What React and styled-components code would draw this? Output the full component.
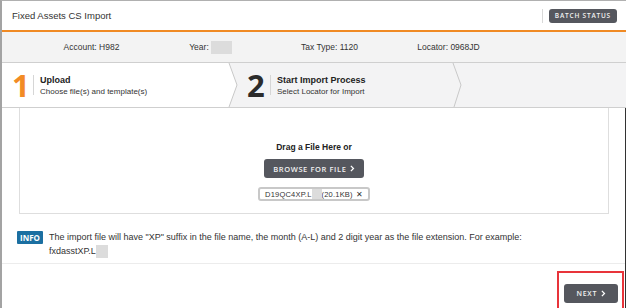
import React from "react";
import styled, { createGlobalStyle } from "styled-components";

const GlobalStyle = createGlobalStyle`
	* { box-sizing: border-box; }
	body {
		margin: 0;
		background: #fff;
		font-family: "Liberation Sans", Arial, sans-serif;
		color: #333;
	}
`;

const Chevron = ({ size = 7 }) => (
	<svg width={size * 0.62} height={size} viewBox="0 0 5 8">
		<path d="M1 1 L4 4 L1 7" fill="none" stroke="#fff" strokeWidth="1.5" />
	</svg>
);

const App = () => {
	return (
		<>
			<GlobalStyle />
			<Frame>
				<Header>
					<Title>Fixed Assets CS Import</Title>
					<HeaderRight>
						<Divider />
						<DarkButton $size="6.5px" $pad="0 6px" $h="14px">
							BATCH STATUS
						</DarkButton>
					</HeaderRight>
				</Header>

				<InfoBar>
					<InfoItem>Account: H982</InfoItem>
					<InfoItem>
						Year: <Blur $w="21px" $h="13px" />
					</InfoItem>
					<InfoItem>Tax Type: 1120</InfoItem>
					<InfoItem>Locator: 0968JD</InfoItem>
				</InfoBar>

				<Steps>
					<Step $width="235px" $active>
						<StepNum $color="#f28b25">1</StepNum>
						<StepSep />
						<StepText>
							<StepTitle>Upload</StepTitle>
							<StepSub>Choose file(s) and template(s)</StepSub>
						</StepText>
						<StepArrow viewBox="0 0 10 44" preserveAspectRatio="none">
							<polygon points="0,0 1,0 9,22 1,44 0,44" fill="#fff" />
							<polyline points="1,0 9,22 1,44" fill="none" stroke="#c8c8c8" strokeWidth="1" />
						</StepArrow>
					</Step>
					<Step $width="224px">
						<StepNum $color="#2b2b2b" $pl="10px">2</StepNum>
						<StepSep />
						<StepText>
							<StepTitle>Start Import Process</StepTitle>
							<StepSub>Select Locator for Import</StepSub>
						</StepText>
						<StepArrow viewBox="0 0 10 44" preserveAspectRatio="none">
							<polyline points="1,0 9,22 2,44" fill="none" stroke="#c8c8c8" strokeWidth="1" />
						</StepArrow>
					</Step>
				</Steps>

				<Body>
					<DropZone>
						<DropLabel>Drag a File Here or</DropLabel>
						<DarkButton $size="7.5px" $pad="0 9px" $h="19px" $ls="0.6px">
							BROWSE FOR FILE <Chevron size={7} />
						</DarkButton>
						<FileChip>
							D19QC4XP.L<Blur $w="10px" $h="10px" />(20.1KB)
							<Close>✕</Close>
						</FileChip>
					</DropZone>

					<Note>
						<Badge>INFO</Badge>
						<NoteText>
							The import file will have "XP" suffix in the file name, the month (A-L) and 2
							digit year as the file extension. For example:
							<br />
							fxdasstXP.L<Blur $w="12px" $h="13px" />
						</NoteText>
					</Note>

					<Footer>
						<Highlight>
							<DarkButton $size="7px" $pad="0 8px" $h="19px" $w="54px">
								NEXT <Chevron size={7} />
							</DarkButton>
						</Highlight>
					</Footer>
				</Body>
			</Frame>
		</>
	);
};

export default App;

const Frame = styled.div`
	width: 626px;
	height: 308px;
	border-top: 1px solid #b0b0b0;
	border-left: 2px solid #a3a3a3;
	display: flex;
	flex-direction: column;
	overflow: hidden;
`;

const Header = styled.div`
	height: 31px;
	flex: none;
	display: flex;
	align-items: center;
	justify-content: space-between;
	padding: 0 9px 0 10px;
	border-bottom: 2px solid #f08a24;
`;

const Title = styled.div`
	font-size: 9.5px;
	color: #333;
`;

const HeaderRight = styled.div`
	display: flex;
	align-items: center;
	gap: 6px;
`;

const Divider = styled.div`
	width: 1px;
	height: 14px;
	background: #d8d8d8;
`;

const DarkButton = styled.div`
	display: inline-flex;
	align-items: center;
	justify-content: center;
	gap: 4px;
	height: ${(p) => p.$h};
	width: ${(p) => p.$w || "auto"};
	padding: ${(p) => p.$pad};
	background: #55575e;
	color: #f2f2f2;
	border-radius: 3px;
	font-family: "Open Sans", sans-serif;
	font-weight: 600;
	font-size: ${(p) => p.$size};
	letter-spacing: ${(p) => p.$ls || "0.8px"};
	white-space: nowrap;
`;

const InfoBar = styled.div`
	height: 30px;
	flex: none;
	background: #f3f3f3;
	display: grid;
	grid-template-columns: repeat(4, 119px);
	align-items: center;
	padding-left: 30px;
`;

const InfoItem = styled.div`
	font-size: 8.5px;
	color: #333;
	text-align: center;
	display: flex;
	align-items: center;
	justify-content: center;
	gap: 2px;
`;

const Blur = styled.span`
	display: inline-block;
	width: ${(p) => p.$w};
	height: ${(p) => p.$h};
	background: #dcdcdc;
	filter: blur(0.6px);
	vertical-align: middle;
`;

const Steps = styled.div`
	height: 46px;
	flex: none;
	display: flex;
	background: #f3f3f4;
	border-top: 1px solid #cfcfcf;
	border-bottom: 1px solid #cfcfcf;
`;

const Step = styled.div`
	position: relative;
	width: ${(p) => p.$width};
	display: flex;
	align-items: center;
	padding-left: ${(p) => (p.$active ? "10px" : "0")};
	background: ${(p) =>
		p.$active ? "linear-gradient(to right, #fff calc(100% - 9px), transparent 0)" : "transparent"};
`;

const StepArrow = styled.svg`
	position: absolute;
	right: -1px;
	top: 0;
	width: 10px;
	height: 100%;
`;

const StepNum = styled.div`
	font-family: "Open Sans", sans-serif;
	font-weight: 700;
	font-size: 31px;
	line-height: 1;
	color: ${(p) => p.$color};
	padding-left: ${(p) => p.$pl || "0"};
	width: ${(p) => (p.$pl ? "33px" : "21px")};
`;

const StepSep = styled.div`
	width: 1px;
	height: 20px;
	background: #d6d6d6;
	margin-right: 6px;
`;

const StepText = styled.div`
	display: flex;
	flex-direction: column;
	gap: 2px;
`;

const StepTitle = styled.div`
	font-size: 9px;
	font-weight: 700;
	color: #222;
`;

const StepSub = styled.div`
	font-size: 8px;
	color: #333;
`;

const Body = styled.div`
	flex: 1;
	display: flex;
	flex-direction: column;
	border-right: 1px solid #333;
	min-height: 0;
`;

const DropZone = styled.div`
	margin: 0 16px 0 17px;
	height: 106px;
	flex: none;
	border: 1px solid #dedede;
	border-top: none;
	display: flex;
	flex-direction: column;
	align-items: center;
	padding-top: 34px;
`;

const DropLabel = styled.div`
	font-size: 8.5px;
	font-weight: 700;
	color: #222;
	margin-bottom: 7px;
`;

const FileChip = styled.div`
	margin-top: 9px;
	height: 14px;
	display: flex;
	align-items: center;
	padding: 0 5px;
	border: 2px solid #c8c8c8;
	border-radius: 3px;
	font-size: 7.5px;
	color: #333;
	letter-spacing: 0.2px;
`;

const Close = styled.span`
	margin-left: 3px;
	font-size: 8px;
`;

const Note = styled.div`
	display: flex;
	align-items: flex-start;
	gap: 6px;
	padding: 17px 0 0 15px;
	flex: none;
`;

const Badge = styled.div`
	background: #1b6fa1;
	color: #fff;
	font-family: "Open Sans", sans-serif;
	font-weight: 700;
	font-size: 8px;
	padding: 1px 3px;
	border-radius: 1px;
	line-height: 11px;
`;

const NoteText = styled.div`
	font-size: 9px;
	line-height: 14px;
	color: #333;
	margin-top: -1px;
	max-width: 500px;
`;

const Footer = styled.div`
	margin-top: 5px;
	border-top: 1px solid #ececec;
	flex: none;
	height: 50px;
	display: flex;
	justify-content: flex-end;
	align-items: flex-start;
	padding: 7px 1px 0 0;
`;

const Highlight = styled.div`
	border: 2px solid #e8343a;
	padding: 9px 4px 12px 5px;
`;
